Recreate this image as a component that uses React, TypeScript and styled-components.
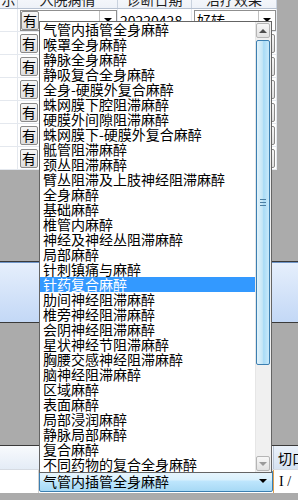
import React from "react";
import styled, { createGlobalStyle } from "styled-components";

const GlobalStyle = createGlobalStyle`
	html, body {
		margin: 0;
		padding: 0;
		background: #ababab;
	}
	body {
		font-family: "Noto Sans CJK SC", "DejaVu Sans", sans-serif;
		font-size: 14px;
		color: #000;
	}
`;

const Screen = styled.div`
	position: relative;
	width: 298px;
	height: 500px;
	overflow: hidden;
	background: #ababab;
	display: flex;
	flex-direction: column;
`;

const Grid = styled.div`
	width: 277px;
	margin-top: -11px;
	background: #fff;
	display: flex;
	flex-direction: column;
`;

const cols = "18px 100px 74px 85px";

const HeaderRow = styled.div`
	display: grid;
	grid-template-columns: ${cols};
	height: 20px;
	background: linear-gradient(#fbfcfe, #eef2f8);
	border-bottom: 1px solid #b7c2d2;
	box-sizing: border-box;
`;

const HeaderCell = styled.div`
	display: flex;
	align-items: center;
	justify-content: center;
	border-right: 1px solid #c9d2de;
	line-height: 14px;
	color: #1e1e1e;
	overflow: hidden;
	white-space: nowrap;
`;

const Row = styled.div`
	display: grid;
	grid-template-columns: ${cols};
	height: 23px;
	border-bottom: 1px solid #e4e8ee;
	box-sizing: border-box;
`;

const Cell = styled.div`
	display: flex;
	align-items: center;
	padding-left: 2px;
	border-right: 1px solid #e4e8ee;
	overflow: hidden;
	white-space: nowrap;
	line-height: 14px;
`;

const YesButton = styled.div`
	width: 18px;
	height: 19px;
	box-sizing: border-box;
	display: flex;
	align-items: center;
	justify-content: center;
	border: 1px solid #8a8a8a;
	border-radius: 2px;
	background: linear-gradient(#f6f6f6, #dedede);
	flex-shrink: 0;
`;

const Combo = styled.div<{ $width: number }>`
	display: flex;
	align-items: center;
	width: ${p => p.$width}px;
	height: 21px;
	box-sizing: border-box;
	border: 1px solid #8f8f8f;
	background: #fff;
`;

const ComboText = styled.div`
	flex: 1;
	padding-left: 2px;
	overflow: hidden;
`;

const ComboArrow = styled.div`
	width: 16px;
	height: 100%;
	display: flex;
	align-items: center;
	justify-content: center;
	border-left: 1px solid #c0c0c0;
`;

const Triangle = styled.span<{ $up?: boolean; $color?: string }>`
	width: 0;
	height: 0;
	border-left: 4px solid transparent;
	border-right: 4px solid transparent;
	${p => p.$up
		? `border-bottom: 4px solid ${p.$color || "#000"};`
		: `border-top: 4px solid ${p.$color || "#000"};`}
`;

const RowButton = styled.div`
	margin-left: auto;
	margin-right: 1px;
	width: 70px;
	height: 19px;
	box-sizing: border-box;
	border: 1px solid #8a8a8a;
	border-radius: 2px;
	background: linear-gradient(#f6f6f6, #dedede);
`;

const Gap = styled.div<{ $h: number }>`
	height: ${p => p.$h}px;
	flex-shrink: 0;
`;

const Band = styled.div`
	height: 62px;
	flex-shrink: 0;
	box-sizing: border-box;
	border-top: 1px solid #3a3a3a;
	border-bottom: 1px solid #3a3a3a;
	box-shadow: inset 0 1px 0 #6f95c8;
	background: linear-gradient(#e6effc, #c3d8f6);
`;

const Bottom = styled.div`
	flex: 1;
	display: flex;
	flex-direction: column;
`;

const BottomHeader = styled.div`
	display: grid;
	grid-template-columns: 273px 25px;
	height: 24px;
	border-top: 1px solid #3a3a3a;
	box-sizing: border-box;
	background: linear-gradient(#f8fafd, #e4ecf6);
`;

const BottomHeaderCell = styled.div`
	display: flex;
	align-items: center;
	padding-left: 4px;
	border-left: 1px solid #b9c5d5;
	background: linear-gradient(#eaf1fa, #d6e3f2);
	white-space: nowrap;
	overflow: hidden;
`;

const BottomRow = styled.div`
	display: grid;
	grid-template-columns: 39px 234px 25px;
	height: 24px;
	background: #fff;
	border-top: 1px solid #d6dbe2;
	box-sizing: border-box;
`;

const BottomCell = styled.div`
	border-right: 1px solid #d0d0d0;
`;

const HotCombo = styled.div`
	display: flex;
	align-items: center;
	height: 22px;
	box-sizing: border-box;
	border: 1px solid #3c7fb1;
	border-radius: 2px;
	background: linear-gradient(#eaf6fd 0%, #d9f0fc 45%, #bee6fd 50%, #a7d9f5 100%);
	padding-left: 3px;
	padding-right: 5px;
`;

const HotText = styled.div`
	flex: 1;
	white-space: nowrap;
	overflow: hidden;
`;

const EditCell = styled.div`
	display: flex;
	align-items: center;
	padding-left: 5px;
	border-left: 1px solid #e0a050;
	font-family: "Liberation Serif", serif;
	font-size: 14px;
	white-space: nowrap;
	overflow: hidden;
`;

const Popup = styled.div`
	position: absolute;
	left: 39px;
	top: 21px;
	width: 233px;
	height: 452px;
	box-sizing: border-box;
	border: 1px solid #646464;
	background: #fff;
	display: flex;
`;

const List = styled.div`
	flex: 1;
	display: flex;
	flex-direction: column;
`;

const Item = styled.div<{ $selected?: boolean }>`
	height: 15px;
	line-height: 15px;
	padding-left: 3px;
	white-space: nowrap;
	overflow: hidden;
	background: ${p => p.$selected ? "#3399ff" : "transparent"};
	color: ${p => p.$selected ? "#fff" : "#000"};
`;

const ScrollBar = styled.div`
	width: 16px;
	display: flex;
	flex-direction: column;
	background: #f0f0f0;
	border-left: 1px solid #e6e6e6;
	padding: 1px 1px 1px 0;
	box-sizing: border-box;
`;

const ScrollButton = styled.div`
	height: 15px;
	box-sizing: border-box;
	border: 1px solid #b5b5b5;
	border-radius: 2px;
	background: linear-gradient(#f7f7f7, #e2e2e2);
	display: flex;
	align-items: center;
	justify-content: center;
	flex-shrink: 0;
`;

const Track = styled.div`
	flex: 1;
	display: flex;
	flex-direction: column;
	padding: 2px 0;
`;

const Thumb = styled.div`
	height: 325px;
	box-sizing: border-box;
	border: 1px solid #3c7fb1;
	border-radius: 2px;
	background: linear-gradient(90deg, #e3f4fc, #c4e5f6 45%, #a9dbf6 55%, #c9e9fa);
	display: flex;
	align-items: center;
	justify-content: center;
`;

const Grip = styled.div`
	width: 6px;
	height: 7px;
	background: repeating-linear-gradient(#4b7ea3 0 1px, transparent 1px 3px);
`;

const items = [
	"气管内插管全身麻醉",
	"喉罩全身麻醉",
	"静脉全身麻醉",
	"静吸复合全身麻醉",
	"全身-硬膜外复合麻醉",
	"蛛网膜下腔阻滞麻醉",
	"硬膜外间隙阻滞麻醉",
	"蛛网膜下-硬膜外复合麻醉",
	"骶管阻滞麻醉",
	"颈丛阻滞麻醉",
	"臂丛阻滞及上肢神经阻滞麻醉",
	"全身麻醉",
	"基础麻醉",
	"椎管内麻醉",
	"神经及神经丛阻滞麻醉",
	"局部麻醉",
	"针刺镇痛与麻醉",
	"针药复合麻醉",
	"肋间神经阻滞麻醉",
	"椎旁神经阻滞麻醉",
	"会阴神经阻滞麻醉",
	"星状神经节阻滞麻醉",
	"胸腰交感神经阻滞麻醉",
	"脑神经阻滞麻醉",
	"区域麻醉",
	"表面麻醉",
	"局部浸润麻醉",
	"静脉局部麻醉",
	"复合麻醉",
	"不同药物的复合全身麻醉",
];

const selected = "针药复合麻醉";

export default function App() {
	return (
		<>
			<GlobalStyle />
			<Screen>
				<Grid>
					<HeaderRow>
						<HeaderCell>示</HeaderCell>
						<HeaderCell>入院病情</HeaderCell>
						<HeaderCell>诊断日期</HeaderCell>
						<HeaderCell>治疗效果</HeaderCell>
					</HeaderRow>
					<Row>
						<Cell />
						<Cell>
							<Combo $width={98}>
								<YesButton>有</YesButton>
								<ComboText />
								<ComboArrow><Triangle /></ComboArrow>
							</Combo>
						</Cell>
						<Cell>20220428</Cell>
						<Cell>
							<Combo $width={82}>
								<ComboText>好转</ComboText>
								<ComboArrow><Triangle /></ComboArrow>
							</Combo>
						</Cell>
					</Row>
					{[0, 1, 2, 3, 4, 5].map(i => (
						<Row key={i}>
							<Cell />
							<Cell><YesButton>有</YesButton></Cell>
							<Cell />
							<Cell><RowButton /></Cell>
						</Row>
					))}
				</Grid>
				<Gap $h={91} />
				<Band />
				<Gap $h={122} />
				<Bottom>
					<BottomHeader>
						<div />
						<BottomHeaderCell>切口</BottomHeaderCell>
					</BottomHeader>
					<BottomRow>
						<BottomCell />
						<HotCombo>
							<HotText>气管内插管全身麻醉</HotText>
							<Triangle />
						</HotCombo>
						<EditCell>I /</EditCell>
					</BottomRow>
				</Bottom>

				<Popup>
					<List>
						{items.map(t => (
							<Item key={t} $selected={t === selected}>{t}</Item>
						))}
					</List>
					<ScrollBar>
						<ScrollButton><Triangle $up $color="#4d4d4d" /></ScrollButton>
						<Track>
							<Thumb><Grip /></Thumb>
						</Track>
						<ScrollButton><Triangle $color="#9a9a9a" /></ScrollButton>
					</ScrollBar>
				</Popup>
			</Screen>
		</>
	);
}
